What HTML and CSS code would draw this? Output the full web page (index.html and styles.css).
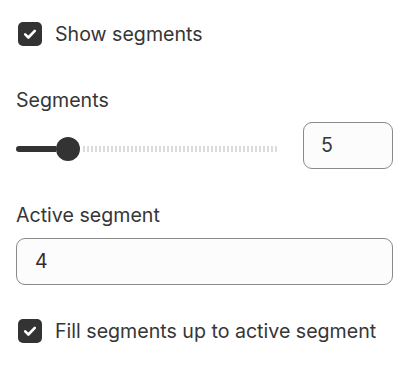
FILE: index.html
```html
<!DOCTYPE html>
<html>
<head>
<meta charset="utf-8">
<link rel="stylesheet" href="styles.css">
</head>
<body>
<div class="panel">
  <label class="check-row first">
    <span class="box"><svg viewBox="0 0 24 24" width="24" height="24"><path d="M7.2 12.4l3.2 3.1 6.4-6.6" fill="none" stroke="#fff" stroke-width="2.6" stroke-linecap="round" stroke-linejoin="round"/></svg></span>
    <span class="check-text">Show segments</span>
  </label>

  <div class="field seg-field">
    <div class="label">Segments</div>
    <div class="slider-row">
      <div class="slider">
        <div class="fill"></div>
        <div class="thumb"></div>
        <div class="rest"></div>
      </div>
      <div class="num-box">5</div>
    </div>
  </div>

  <div class="field active-field">
    <div class="label">Active segment</div>
    <div class="text-box">4</div>
  </div>

  <label class="check-row last">
    <span class="box"><svg viewBox="0 0 24 24" width="24" height="24"><path d="M7.2 12.4l3.2 3.1 6.4-6.6" fill="none" stroke="#fff" stroke-width="2.6" stroke-linecap="round" stroke-linejoin="round"/></svg></span>
    <span class="check-text">Fill segments up to active segment</span>
  </label>
</div>
</body>
</html>
```

FILE: styles.css
```css
html, body {
  margin: 0;
  padding: 0;
  background: #ffffff;
}
body {
  font-family: Inter, "Noto Sans", sans-serif;
  color: #363636;
  font-size: 19.6px;
}
.panel {
  padding: 22px 12px 0 16px;
  display: flex;
  flex-direction: column;
}
.check-row {
  display: flex;
  align-items: center;
  padding-left: 2px;
  height: 24px;
}
.box {
  width: 24px;
  height: 24px;
  border-radius: 5px;
  background: #333333;
  display: block;
  flex: none;
}
.box svg {
  display: block;
}
.check-text {
  margin-left: 13px;
  line-height: 24px;
}
.field {
  display: flex;
  flex-direction: column;
}
.seg-field {
  margin-top: 42px;
}
.label {
  line-height: 24px;
}
.slider-row {
  display: flex;
  align-items: flex-start;
  margin-top: 10px;
}
.slider {
  flex: none;
  width: 263px;
  display: flex;
  align-items: center;
  height: 24px;
  margin-top: 15px;
}
.fill {
  width: 40px;
  height: 6px;
  background: #333333;
  border-radius: 3px 0 0 3px;
}
.thumb {
  width: 24px;
  height: 24px;
  border-radius: 50%;
  background: #333333;
  flex: none;
}
.rest {
  flex: 1;
  height: 6px;
  margin-left: 3px;
  border-radius: 0 3px 3px 0;
  background: repeating-linear-gradient(to right, #dcdcdc 0 2px, transparent 2px 4px);
}
.num-box {
  margin-left: 24px;
  width: 90px;
  height: 47px;
  box-sizing: border-box;
  border: 1px solid #8a8a8a;
  border-radius: 9px;
  background: #fcfcfc;
  padding-left: 17px;
  line-height: 45px;
}
.active-field {
  margin-top: 34px;
}
.text-box {
  margin-top: 11px;
  width: 377px;
  height: 47px;
  box-sizing: border-box;
  border: 1px solid #8a8a8a;
  border-radius: 9px;
  background: #fcfcfc;
  padding-left: 18px;
  line-height: 45px;
  color: #3a2828;
}
.last {
  margin-top: 34px;
}
```
